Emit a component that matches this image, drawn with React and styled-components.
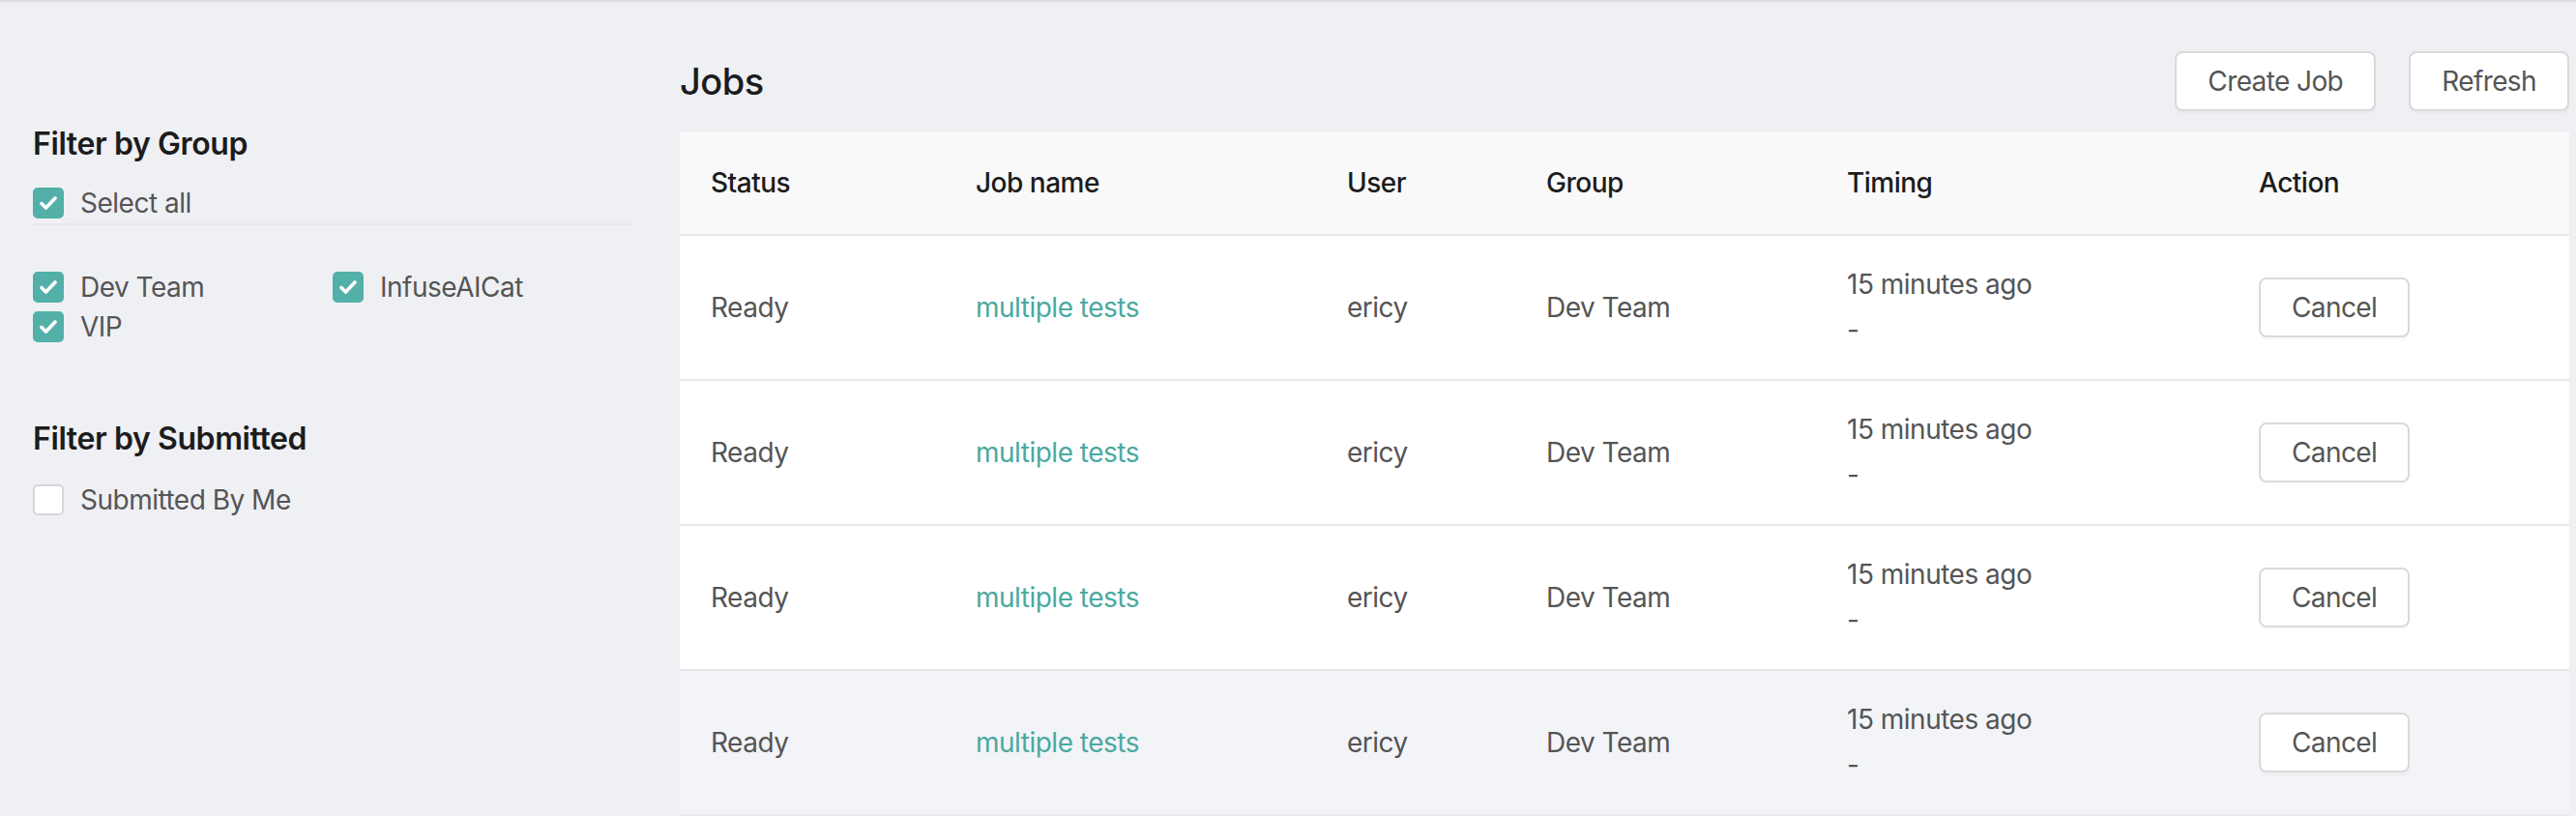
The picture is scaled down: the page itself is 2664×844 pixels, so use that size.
import styled, { createGlobalStyle } from 'styled-components'

const colors = {
    page: '#eff0f4',
    teal: '#53b0a8',
    link: '#4aa99f',
    text: '#555555',
    heading: '#1c1c1c',
    line: '#e8e8ea',
}

const GlobalStyle = createGlobalStyle`
  body {
    margin: 0;
    background: ${colors.page};
    font-family: Inter, "Liberation Sans", Arial, sans-serif;
    -webkit-font-smoothing: antialiased;
  }
  * {
    box-sizing: border-box;
  }
`

const Page = styled.div`
    display: grid;
    grid-template-columns: 703px 1fr;
    min-height: 100vh;
    border-top: 2px solid #dcdcdc;
`

const Sidebar = styled.aside`
    padding: 127px 49px 0 34px;
`

const FilterTitle = styled.h3`
    margin: 0;
    font-size: 32px;
    line-height: 40px;
    font-weight: 600;
    color: ${colors.heading};
    letter-spacing: -0.4px;
`

const FilterSection = styled.section`
    margin-bottom: ${({ $gap }) => $gap || 0}px;
`

const CheckRow = styled.label`
    display: flex;
    align-items: center;
    gap: 17px;
    height: 32px;
    font-size: 28px;
    color: ${colors.text};
    letter-spacing: -0.5px;
`

const SelectAll = styled.div`
    margin-top: 25px;
    padding-bottom: 5px;
    border-bottom: 2px solid ${colors.line};
`

const GroupGrid = styled.div`
    display: grid;
    grid-template-columns: 310px 310px;
    row-gap: 9px;
    margin-top: 48px;
`

const Box = styled.span`
    display: inline-flex;
    align-items: center;
    justify-content: center;
    width: 32px;
    height: 32px;
    flex: none;
    border-radius: 5px;
    background: ${({ $checked }) => ($checked ? colors.teal : '#ffffff')};
    border: 2px solid ${({ $checked }) => ($checked ? colors.teal : '#d6d6d6')};
`

const SubmittedList = styled.div`
    margin-top: 27px;
`

const Main = styled.main`
    padding-right: 7px;
`

const Header = styled.div`
    display: flex;
    align-items: center;
    height: 134px;
    padding: 51px 0 21px;
`

const Title = styled.h2`
    flex: 1;
    margin: 0;
    font-size: 38px;
    font-weight: 500;
    color: ${colors.heading};
    letter-spacing: -0.5px;
`

const Actions = styled.div`
    display: flex;
    gap: 34px;
`

const Button = styled.button`
    height: 62px;
    padding: 0 32px;
    background: #ffffff;
    border: 2px solid #dadada;
    border-radius: 8px;
    box-shadow: 0 3px 0 rgba(0, 0, 0, 0.02);
    font-family: inherit;
    font-size: 28px;
    color: ${colors.text};
    letter-spacing: -0.6px;
    cursor: pointer;
`

const Table = styled.div`
    background: #ffffff;
`

const Row = styled.div`
    display: grid;
    grid-template-columns: 274px 384px 206px 311px 426px 1fr;
    align-items: center;
    height: ${({ $head }) => ($head ? 108 : 150)}px;
    border-bottom: 2px solid ${colors.line};
    background: ${({ $head, $hover }) => ($head ? '#f9f9f9' : $hover ? '#f3f4f8' : '#ffffff')};
`

const Cell = styled.div`
    padding-left: 32px;
    font-size: 28px;
    line-height: 43px;
    letter-spacing: -0.5px;
    color: ${({ $head }) => ($head ? colors.heading : colors.text)};
    font-weight: ${({ $head }) => ($head ? 500 : 400)};
`

const TimingLine = styled.div`
    line-height: 47px;
`

const JobLink = styled.a`
    color: ${colors.link};
    text-decoration: none;
    cursor: pointer;
`

function Check() {
    return (
        <svg width="18" height="14" viewBox="0 0 18 14" fill="none">
            <path d="M2 7.5l4.5 4.5L16 2" stroke="#ffffff" strokeWidth="3.6" strokeLinecap="round" strokeLinejoin="round" />
        </svg>
    )
}

function Checkbox({ checked, label }) {
    return (
        <CheckRow>
            <Box $checked={checked}>{checked && <Check />}</Box>
            {label}
        </CheckRow>
    )
}

const jobs = [1, 2, 3, 4].map((id) => ({
    id,
    status: 'Ready',
    name: 'multiple tests',
    user: 'ericy',
    group: 'Dev Team',
    timing: '15 minutes ago',
}))

function App() {
    return (
        <>
            <GlobalStyle />
            <Page>
                <Sidebar>
                    <FilterSection $gap={80}>
                        <FilterTitle>Filter by Group</FilterTitle>
                        <SelectAll>
                            <Checkbox checked label="Select all" />
                        </SelectAll>
                        <GroupGrid>
                            <Checkbox checked label="Dev Team" />
                            <Checkbox checked label="InfuseAICat" />
                            <Checkbox checked label="VIP" />
                        </GroupGrid>
                    </FilterSection>
                    <FilterSection>
                        <FilterTitle>Filter by Submitted</FilterTitle>
                        <SubmittedList>
                            <Checkbox label="Submitted By Me" />
                        </SubmittedList>
                    </FilterSection>
                </Sidebar>
                <Main>
                    <Header>
                        <Title>Jobs</Title>
                        <Actions>
                            <Button>Create Job</Button>
                            <Button>Refresh</Button>
                        </Actions>
                    </Header>
                    <Table>
                        <Row $head>
                            {['Status', 'Job name', 'User', 'Group', 'Timing', 'Action'].map((h) => (
                                <Cell $head key={h}>{h}</Cell>
                            ))}
                        </Row>
                        {jobs.map((job, i) => (
                            <Row key={job.id} $hover={i === jobs.length - 1}>
                                <Cell>{job.status}</Cell>
                                <Cell><JobLink>{job.name}</JobLink></Cell>
                                <Cell>{job.user}</Cell>
                                <Cell>{job.group}</Cell>
                                <Cell>
                                    <TimingLine>{job.timing}</TimingLine>
                                    <TimingLine>-</TimingLine>
                                </Cell>
                                <Cell><Button>Cancel</Button></Cell>
                            </Row>
                        ))}
                    </Table>
                </Main>
            </Page>
        </>
    )
}

export default App
